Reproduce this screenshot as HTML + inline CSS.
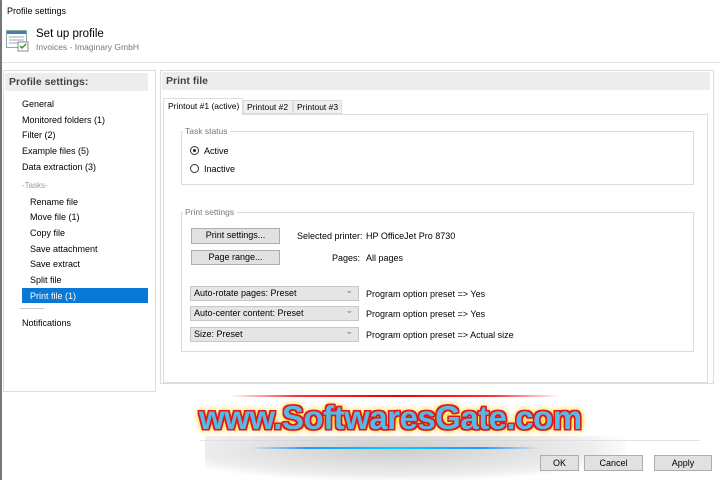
<!DOCTYPE html>
<html><head><style>
*{margin:0;padding:0;box-sizing:border-box}
body{width:720px;height:480px;background:#fff;font-family:"Liberation Sans",sans-serif;font-size:9px;color:#000;position:relative;overflow:hidden}
.a{position:absolute;white-space:nowrap}
.box{position:absolute;border:1px solid #ddd}
.band{position:absolute;background:#ededed;font-weight:bold;font-size:10.5px;color:#444;padding-left:4px;line-height:18px}
.it{position:absolute;left:22px;font-size:9px;white-space:nowrap}
.btn{position:absolute;background:#e1e1e1;border:1px solid #adadad;text-align:center;line-height:13px;font-size:9px;white-space:nowrap}
.dd{position:absolute;left:190px;width:169px;height:15px;background:#e5e5e5;border:1px solid #c8c8c8;line-height:13px;padding-left:3px;font-size:9px;white-space:nowrap}
.dd:after{content:"⌄";position:absolute;right:5px;top:-3px;color:#777;font-size:9px}
.grp{position:absolute;border:1px solid #dcdcdc}
.lg{position:absolute;background:#fff;color:#777;font-size:8.5px;padding:0 2px}
.rad{position:absolute;width:9px;height:9px;border:1px solid #333;border-radius:50%}
.tab{position:absolute;white-space:nowrap;font-size:8.5px}
</style></head><body>
<div class="a" style="left:0;top:0;width:2px;height:480px;background:#777"></div>
<div class="a" style="left:7px;top:6px;font-size:9px">Profile settings</div>
<svg class="a" style="left:6px;top:30px" width="24" height="22"><rect x="0.5" y="0.5" width="20" height="17" fill="#fff" stroke="#8aa"/><rect x="1" y="1" width="19" height="3" fill="#4a7ab0"/><line x1="3" y1="7" x2="18" y2="7" stroke="#9ab"/><line x1="3" y1="10" x2="18" y2="10" stroke="#9ab"/><line x1="3" y1="13" x2="12" y2="13" stroke="#9ab"/><rect x="12" y="12" width="10" height="9" fill="#fff" stroke="#888"/><path d="M14 16l2 2 4-4" stroke="#2a9a3a" stroke-width="1.5" fill="none"/></svg>
<div class="a" style="left:36px;top:28px;font-size:11.5px">Set up profile</div>
<div class="a" style="left:36px;top:42px;font-size:8.5px;color:#777">Invoices - Imaginary GmbH</div>
<div class="a" style="left:2px;top:62px;width:718px;height:1px;background:#e3e3e3"></div>

<div class="box" style="left:3px;top:70px;width:153px;height:322px"></div>
<div class="band" style="left:5px;top:73px;width:143px">Profile settings:</div>
<div class="it" style="top:99px">General</div>
<div class="it" style="top:115px">Monitored folders (1)</div>
<div class="it" style="top:130px">Filter (2)</div>
<div class="it" style="top:146px">Example files (5)</div>
<div class="it" style="top:162px">Data extraction (3)</div>
<div class="it" style="top:181px;color:#999;font-size:8px">-Tasks-</div>
<div class="it" style="left:30px;top:197px">Rename file</div>
<div class="it" style="left:30px;top:212px">Move file (1)</div>
<div class="it" style="left:30px;top:228px">Copy file</div>
<div class="it" style="left:30px;top:244px">Save attachment</div>
<div class="it" style="left:30px;top:259px">Save extract</div>
<div class="it" style="left:30px;top:275px">Split file</div>
<div class="a" style="left:22px;top:288px;width:126px;height:15px;background:#0a78d7"></div>
<div class="it" style="left:30px;top:291px;color:#fff">Print file (1)</div>
<div class="a" style="left:20px;top:308px;width:24px;height:1px;background:#ccc"></div>
<div class="it" style="top:318px">Notifications</div>

<div class="box" style="left:160px;top:70px;width:554px;height:314px"></div>
<div class="band" style="left:162px;top:72px;width:548px">Print file</div>
<div class="box" style="left:163px;top:114px;width:545px;height:269px"></div>
<div class="tab" style="left:163px;top:98px;width:80px;height:17px;border:1px solid #ddd;border-bottom:none;background:#fff;line-height:15px;padding-left:4px;z-index:2">Printout #1 (active)</div>
<div class="tab" style="left:243px;top:100px;width:50px;height:14px;border:1px solid #ddd;background:#f0f0f0;line-height:12px;padding-left:3px">Printout #2</div>
<div class="tab" style="left:293px;top:100px;width:49px;height:14px;border:1px solid #ddd;background:#f0f0f0;line-height:12px;padding-left:3px">Printout #3</div>

<div class="grp" style="left:181px;top:131px;width:513px;height:54px"></div>
<div class="lg" style="left:183px;top:126px">Task status</div>
<div class="rad" style="left:190px;top:146px"><div style="position:absolute;left:2px;top:2px;width:3px;height:3px;border-radius:50%;background:#222"></div></div>
<div class="a" style="left:204px;top:146px">Active</div>
<div class="rad" style="left:190px;top:164px"></div>
<div class="a" style="left:204px;top:164px">Inactive</div>

<div class="grp" style="left:181px;top:212px;width:513px;height:140px"></div>
<div class="lg" style="left:183px;top:207px">Print settings</div>
<div class="btn" style="left:191px;top:228px;width:89px;height:16px">Print settings...</div>
<div class="btn" style="left:191px;top:250px;width:89px;height:15px">Page range...</div>
<div class="a" style="left:297px;top:231px">Selected printer:</div>
<div class="a" style="left:366px;top:231px">HP OfficeJet Pro 8730</div>
<div class="a" style="left:332px;top:253px">Pages:</div>
<div class="a" style="left:366px;top:253px">All pages</div>
<div class="dd" style="top:286px">Auto-rotate pages: Preset</div>
<div class="dd" style="top:306px">Auto-center content: Preset</div>
<div class="dd" style="top:327px">Size: Preset</div>
<div class="a" style="left:366px;top:289px">Program option preset =&gt; Yes</div>
<div class="a" style="left:366px;top:309px">Program option preset =&gt; Yes</div>
<div class="a" style="left:366px;top:330px">Program option preset =&gt; Actual size</div>

<div class="a" style="left:200px;top:440px;width:500px;height:1px;background:#e3e3e3"></div>
<div class="a" style="left:205px;top:436px;width:420px;height:44px;background:radial-gradient(ellipse at 45% 30%,#ccc,rgba(220,220,220,.5) 60%,rgba(255,255,255,0) 75%)"></div>
<div class="a" style="left:230px;top:395px;width:330px;height:2px;background:linear-gradient(90deg,transparent,#f33 20%,#e00 50%,#f33 80%,transparent)"></div>
<div class="a" style="left:250px;top:447px;width:290px;height:2px;background:linear-gradient(90deg,transparent,#29f 20%,#0cf 50%,#29f 80%,transparent)"></div>
<div class="a" style="left:199px;top:399px;font-size:33px;font-weight:bold;color:#5ab8e8;letter-spacing:-0.5px;text-shadow:1.5px 0 #e01818,-1.5px 0 #e01818,0 1.5px #e01818,0 -1.5px #e01818,1.5px 1.5px #e01818,-1.5px -1.5px #e01818,1.5px -1.5px #e01818,-1.5px 1.5px #e01818,0 0 4px #ff0,0 0 6px #fd0,0 0 8px #fa0">www.SoftwaresGate.com</div>
<div class="btn" style="left:540px;top:455px;width:39px;height:16px;line-height:14px">OK</div>
<div class="btn" style="left:584px;top:455px;width:59px;height:16px;line-height:14px">Cancel</div>
<div class="btn" style="left:654px;top:455px;width:58px;height:16px;line-height:14px">Apply</div>
</body></html>
